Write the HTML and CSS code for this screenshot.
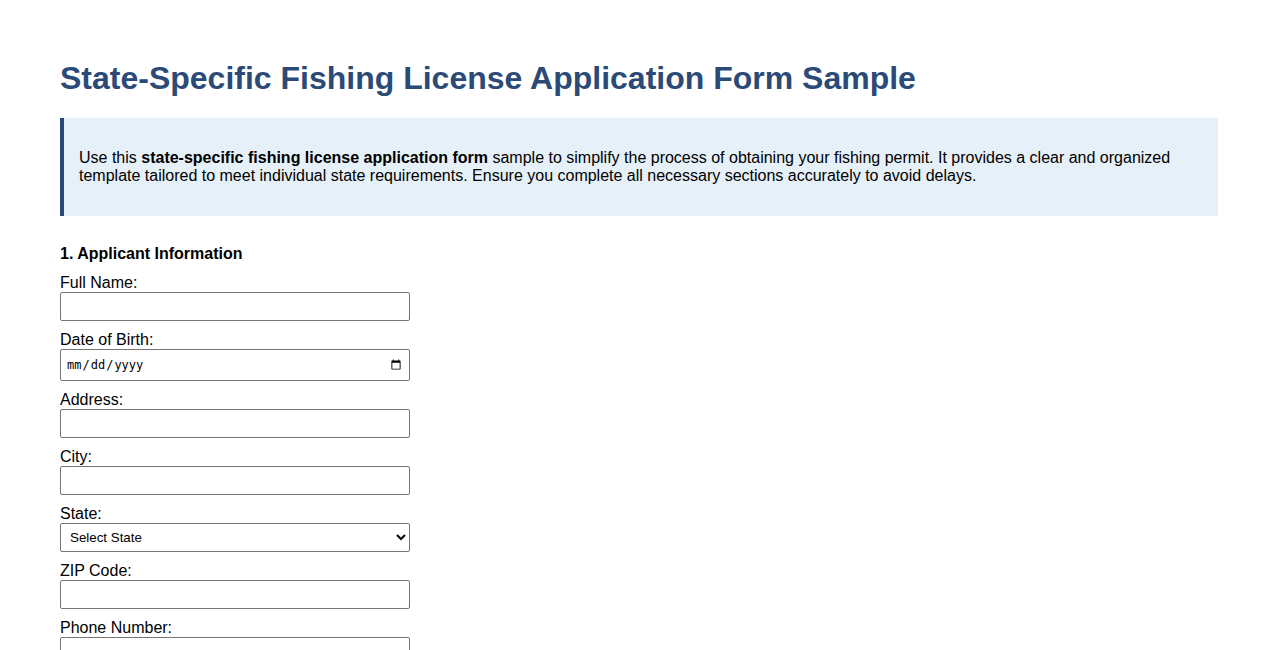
FILE: index.html
```html
<!DOCTYPE html>
<html>
<head>
<meta charset="utf-8">
<link rel="stylesheet" href="styles.css">
</head>
<body>
<div class="page">
  <h1 class="title">State-Specific Fishing License Application Form Sample</h1>
  <div class="intro">
    <p>Use this <strong>state-specific fishing license application form</strong> sample to simplify the process of obtaining your fishing permit. It provides a clear and organized template tailored to meet individual state requirements. Ensure you complete all necessary sections accurately to avoid delays.</p>
  </div>
  <form class="form">
    <h3 class="section-title">1. Applicant Information</h3>
    <label class="label" for="name">Full Name:</label>
    <input class="field" type="text" id="name">
    <label class="label" for="dob">Date of Birth:</label>
    <input class="field date" type="date" id="dob">
    <label class="label" for="addr">Address:</label>
    <input class="field" type="text" id="addr">
    <label class="label" for="city">City:</label>
    <input class="field" type="text" id="city">
    <label class="label" for="state">State:</label>
    <select class="field select" id="state">
      <option>Select State</option>
    </select>
    <label class="label" for="zip">ZIP Code:</label>
    <input class="field" type="text" id="zip">
    <label class="label" for="phone">Phone Number:</label>
    <input class="field" type="tel" id="phone">
  </form>
</div>
</body>
</html>
```
FILE: styles.css
```css
html, body {
  margin: 0;
  padding: 0;
  background: #ffffff;
}
body {
  font-family: Arial, "Liberation Sans", sans-serif;
  color: #000;
  font-size: 16px;
}
.page {
  padding: 40px 60px;
}
.title {
  color: #2b4a78;
  font-size: 32px;
  font-weight: bold;
  margin: 20px 0 21px;
  line-height: 37px;
}
.intro {
  background: #e6f0f9;
  border-left: 4px solid #2b4a78;
  padding: 15px;
}
.intro p {
  margin: 16px 0;
  line-height: 18px;
}
.form {
  margin-top: 28px;
}
.section-title {
  font-size: 16px;
  font-weight: bold;
  margin: 0 0 10px;
  line-height: 20px;
}
.label {
  display: block;
  line-height: 18px;
  margin-bottom: 0;
}
.field {
  display: block;
  width: 350px;
  box-sizing: border-box;
  height: 29px;
  padding: 5px;
  margin: 0 0 10px;
  border: 1px solid #767676;
  border-radius: 2px;
  font-family: Arial, "Liberation Sans", sans-serif;
  font-size: 13.33px;
  background: #fff;
}
.date {
  height: 32px;
  font-family: monospace;
  font-size: 12px;
}
.select {
  padding: 4px 5px;
}
```
